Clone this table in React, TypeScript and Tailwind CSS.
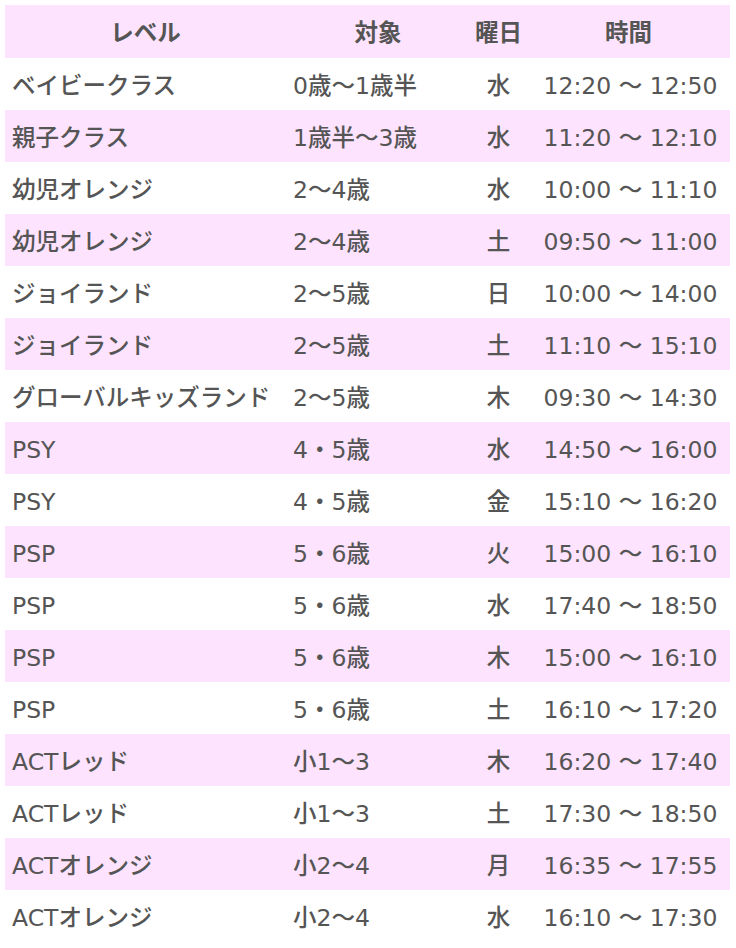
const rows: [string, string, string, string][] = [
	['ベイビークラス', '0歳〜1歳半', '水', '12:20 〜 12:50'],
	['親子クラス', '1歳半〜3歳', '水', '11:20 〜 12:10'],
	['幼児オレンジ', '2〜4歳', '水', '10:00 〜 11:10'],
	['幼児オレンジ', '2〜4歳', '土', '09:50 〜 11:00'],
	['ジョイランド', '2〜5歳', '日', '10:00 〜 14:00'],
	['ジョイランド', '2〜5歳', '土', '11:10 〜 15:10'],
	['グローバルキッズランド', '2〜5歳', '木', '09:30 〜 14:30'],
	['PSY', '4・5歳', '水', '14:50 〜 16:00'],
	['PSY', '4・5歳', '金', '15:10 〜 16:20'],
	['PSP', '5・6歳', '火', '15:00 〜 16:10'],
	['PSP', '5・6歳', '水', '17:40 〜 18:50'],
	['PSP', '5・6歳', '木', '15:00 〜 16:10'],
	['PSP', '5・6歳', '土', '16:10 〜 17:20'],
	['ACTレッド', '小1〜3', '木', '16:20 〜 17:40'],
	['ACTレッド', '小1〜3', '土', '17:30 〜 18:50'],
	['ACTオレンジ', '小2〜4', '月', '16:35 〜 17:55'],
	['ACTオレンジ', '小2〜4', '水', '16:10 〜 17:30'],
]

function App() {
	return (
		<div className="min-h-[948px] bg-white pl-[5px] pt-[5px] font-['DejaVu_Sans','Noto_Sans_CJK_JP',sans-serif] text-[23.5px] font-medium text-[#555]">
			<div className="grid w-[725px] grid-cols-[281px_184px_57px_203px]">
				<div className="col-span-4 grid h-[53px] grid-cols-subgrid items-center bg-[#fde3fd] pt-[5px] font-bold">
					<span className="text-center">レベル</span>
					<span className="text-center">対象</span>
					<span className="text-center">曜日</span>
					<span className="text-center">時間</span>
				</div>
				{rows.map((row, i) => (
					<div
						key={i}
						className={`col-span-4 grid h-[52px] grid-cols-subgrid items-center pt-[6px] ${i % 2 === 1 ? 'bg-[#fde3fd]' : 'bg-white'}`}
					>
						<span className="whitespace-nowrap pl-[7px]">{row[0]}</span>
						<span className="whitespace-nowrap pl-[7px]">{row[1]}</span>
						<span className="text-center">{row[2]}</span>
						<span className="whitespace-nowrap pl-[4px] text-center">{row[3]}</span>
					</div>
				))}
			</div>
		</div>
	)
}

export default App
